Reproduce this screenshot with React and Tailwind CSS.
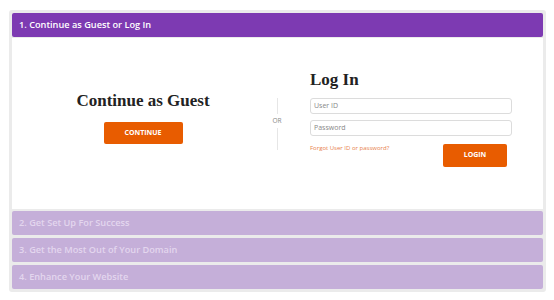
import React from 'react';

const Step = ({ label }) => (
  <div className="h-[24px] rounded-[2px] bg-[#c5afd9] px-[7px] flex items-center text-[9.2px] font-semibold text-[#e3d6ee]">
    {label}
  </div>
);

export default function App() {
  return (
    <div className="w-[554px] h-[300px] bg-white pt-[10px] pl-[9px] font-['Open_Sans',sans-serif]">
      <div className="w-[537px] bg-[#ebebeb] rounded-[3px] p-[3px] flex flex-col">
        {/* active step */}
        <div className="h-[24px] rounded-[2px] bg-[#7d3ab2] px-[7px] flex items-center text-[9.2px] font-semibold text-white">
          1. Continue as Guest or Log In
        </div>
        <div className="h-[171px] bg-white flex mt-[1px]">
          <div className="w-[253px] pl-[9px] flex flex-col items-center pt-[53px]">
            <h2 className="font-['Liberation_Serif',serif] font-bold text-[17px] leading-[20px] text-[#222]">
              Continue as Guest
            </h2>
            <button className="mt-[11px] w-[79px] h-[22px] rounded-[2px] bg-[#e85c00] text-white text-[7px] font-bold">
              CONTINUE
            </button>
          </div>
          <div className="w-[24px] flex flex-col items-center pt-[60px]">
            <div className="w-px h-[16px] bg-[#e6e6e6]" />
            <div className="text-[6.5px] text-[#888] py-[3px] leading-[8px]">OR</div>
            <div className="w-px h-[22px] bg-[#e6e6e6]" />
          </div>
          <div className="flex-1 pl-[21px] pt-[32px] pr-[31px]">
            <h2 className="font-['Liberation_Serif',serif] font-bold text-[17px] leading-[20px] text-[#222]">
              Log In
            </h2>
            <div className="mt-[8px] h-[16px] rounded-[3px] border border-[#dcdcdc] px-[3px] flex items-center text-[7px] text-[#888]">
              User ID
            </div>
            <div className="mt-[6px] h-[16px] rounded-[3px] border border-[#dcdcdc] px-[3px] flex items-center text-[7px] text-[#888]">
              Password
            </div>
            <div className="flex justify-between items-start mt-[7px]">
              <span className="text-[6px] text-[#e8804a] mt-[1px]">Forgot User ID or password?</span>
              <button className="w-[64px] h-[23px] rounded-[2px] bg-[#e85c00] text-white text-[7px] font-bold mt-[1px] mr-[5px]">
                LOGIN
              </button>
            </div>
          </div>
        </div>
        <div className="flex flex-col gap-[3px] mt-[2px]">
          <Step label="2. Get Set Up For Success" />
          <Step label="3. Get the Most Out of Your Domain" />
          <Step label="4. Enhance Your Website" />
        </div>
      </div>
    </div>
  );
}
